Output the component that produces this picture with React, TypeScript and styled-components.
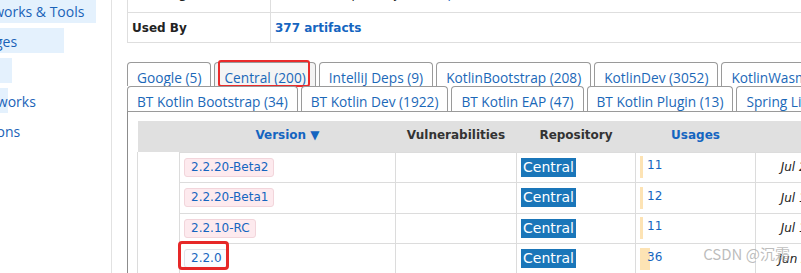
import React from 'react';
import styled, { createGlobalStyle } from 'styled-components';

const GlobalStyle = createGlobalStyle`
  html, body {
    margin: 0;
    padding: 0;
    background: #fff;
    overflow: hidden;
  }
  body {
    font-family: 'DejaVu Sans', Verdana, sans-serif;
    font-size: 12px;
    color: #222;
  }
`;

const categories = [
  { name: 'Testing Frameworks & Tools', bar: 198 },
  { name: 'Android Packages', bar: 166 },
  { name: 'JVM Languages', bar: 114 },
  { name: 'Logging Frameworks', bar: 110 },
  { name: 'Java Specifications', bar: 90 },
];

const tabsTop = [
  { label: 'Google (5)' },
  { label: 'Central (200)', marked: true, shaded: true },
  { label: 'IntelliJ Deps (9)' },
  { label: 'KotlinBootstrap (208)' },
  { label: 'KotlinDev (3052)' },
  { label: 'KotlinWasm (21)' },
];

const tabsBottom = [
  { label: 'BT Kotlin Bootstrap (34)' },
  { label: 'BT Kotlin Dev (1922)' },
  { label: 'BT Kotlin EAP (47)' },
  { label: 'BT Kotlin Plugin (13)' },
  { label: 'Spring Lib M (3)' },
];

const versions = [
  { v: '2.2.20-Beta2', pre: true, usages: 11, date: 'Jul 29, 2025' },
  { v: '2.2.20-Beta1', pre: true, usages: 12, date: 'Jul 15, 2025' },
  { v: '2.2.10-RC', pre: true, usages: 11, date: 'Jul 15, 2025' },
  { v: '2.2.0', pre: false, usages: 36, date: 'Jun 23, 2025', marked: true },
];

const Page = styled.div`
  position: relative;
  display: flex;
  margin-top: -18px;
  min-height: calc(100vh + 18px);
`;

const Sidebar = styled.aside`
  width: 111px;
  flex: none;
  overflow: hidden;
  border-right: 1px solid #e2e2e2;
  padding-top: 16px;
`;

const CategoryList = styled.ul`
  list-style: none;
  margin: 0 0 0 -102px;
  padding: 0;
  display: flex;
  flex-direction: column;
  gap: 5px;
  width: 240px;
`;

const Category = styled.li<{ $bar: number }>`
  height: 25px;
  line-height: 28px;
  padding-left: 3px;
  white-space: nowrap;
  font-family: 'Open Sans', sans-serif;
  font-size: 14px;
  color: #1a63b8;
  background: linear-gradient(#e4f1fd, #e4f1fd) no-repeat;
  background-size: ${(p) => p.$bar}px 100%;
`;

const Main = styled.main`
  flex: 1;
  min-width: 0;
  overflow: hidden;
  padding-left: 15px;
`;

const InfoTable = styled.table`
  border-collapse: collapse;
  width: 760px;

  td {
    border: 1px solid #dedede;
    height: 29px;
    padding: 0 4px;
    white-space: nowrap;
  }
  td:first-child {
    width: 134px;
    font-weight: bold;
  }
`;

const CutRow = styled.tr`
  td {
    height: 18px;
    vertical-align: bottom;
    padding-bottom: 11px;
    line-height: 14px;
  }
`;

const LinkText = styled.a<{ $bold?: boolean }>`
  color: #1565c0;
  text-decoration: none;
  font-weight: ${(p) => (p.$bold ? 'bold' : 'normal')};
`;

const Tabs = styled.div`
  margin-top: 19px;
  width: 760px;
`;

const TabRow = styled.ul<{ $h: number }>`
  list-style: none;
  margin: 0;
  padding: 0;
  display: flex;
  gap: 3px;
  height: ${(p) => p.$h}px;
`;

const Tab = styled.li<{ $shaded?: boolean }>`
  position: relative;
  flex: none;
  box-sizing: border-box;
  height: 100%;
  padding: 4px 9px 0;
  border: 1px solid #9a9a9a;
  border-bottom: none;
  border-radius: 4px 4px 0 0;
  background: ${(p) => (p.$shaded ? '#f4f4f4' : '#fff')};
  font-family: 'Open Sans', sans-serif;
  font-size: 13.7px;
  line-height: 21px;
  color: #1b68b8;
  white-space: nowrap;
`;

const TabMark = styled.span`
  position: absolute;
  left: 3px;
  right: 5px;
  top: -3px;
  bottom: -1px;
  border: 2px solid #ea2a2a;
  border-radius: 3px;
`;

const Panel = styled.div`
  border-top: 1px solid #9a9a9a;
  border-left: 1px solid #8c8c8c;
  padding: 9px 0 0 9px;
`;

const VersionTable = styled.table`
  border-collapse: collapse;
  table-layout: fixed;
  width: 740px;

  th {
    background: #e0e0e0;
    height: 31px;
    padding: 0 0 2px;
    box-sizing: border-box;
    font-weight: bold;
    text-align: center;
    color: #333;
  }
  td {
    border: 1px solid #dcdcdc;
    height: 29.5px;
    padding: 0 4px;
    vertical-align: middle;
    white-space: nowrap;
  }
`;

const HeadLink = styled.span`
  color: #1565c0;
`;

const GroupCell = styled.td`
  border-top: none !important;
  border-bottom: none !important;
`;

const VersionBadge = styled.a<{ $pre: boolean }>`
  position: relative;
  display: inline-block;
  padding: 1px 5px 1px 6px;
  line-height: 15px;
  border-radius: 3px;
  border: 1px solid ${(p) => (p.$pre ? '#f2d5db' : '#dfe3ea')};
  background: ${(p) => (p.$pre ? '#fdeaee' : '#fafcff')};
  color: #1565c0;
  text-decoration: none;
`;

const BadgeMark = styled.span`
  position: absolute;
  left: -7px;
  right: -2px;
  top: -9px;
  bottom: -3px;
  border: 3px solid #e62828;
  border-radius: 4px;
`;

const RepoBadge = styled.span`
  display: inline-block;
  padding: 0 2px;
  line-height: 19px;
  font-size: 14px;
  color: #fff;
  background: #1a76b9;
`;

const Usage = styled.a<{ $bar: number }>`
  display: block;
  height: 22px;
  line-height: 18px;
  padding-left: 7px;
  color: #1565c0;
  text-decoration: none;
  background: linear-gradient(#fde3b4, #fde3b4) no-repeat;
  background-size: ${(p) => p.$bar}px 100%;
`;

const DateCell = styled.td`
  text-align: center;
  font-style: italic;
`;

const Watermark = styled.div`
  position: absolute;
  right: 11px;
  bottom: 11px;
  font-family: 'Noto Sans CJK SC', sans-serif;
  font-size: 15px;
  color: rgba(160, 160, 160, 0.7);
  pointer-events: none;
`;

export default function App() {
  return (
    <>
      <GlobalStyle />
      <Page>
        <Sidebar>
          <CategoryList>
            {categories.map((c) => (
              <Category key={c.name} $bar={c.bar}>
                {c.name}
              </Category>
            ))}
          </CategoryList>
        </Sidebar>

        <Main>
          <InfoTable>
            <tbody>
              <CutRow>
                <td>Ranking</td>
                <td>
                  #1 in MvnRepository (<LinkText>See Top Artifacts</LinkText>)
                </td>
              </CutRow>
              <tr>
                <td>Used By</td>
                <td>
                  <LinkText $bold>377 artifacts</LinkText>
                </td>
              </tr>
            </tbody>
          </InfoTable>

          <Tabs>
            <TabRow $h={24}>
              {tabsTop.map((t) => (
                <Tab key={t.label} $shaded={t.shaded}>
                  {t.label}
                  {t.marked && <TabMark />}
                </Tab>
              ))}
            </TabRow>
            <TabRow $h={25}>
              {tabsBottom.map((t) => (
                <Tab key={t.label}>{t.label}</Tab>
              ))}
            </TabRow>

            <Panel>
              <VersionTable>
                <colgroup>
                  <col style={{ width: 42 }} />
                  <col style={{ width: 216 }} />
                  <col style={{ width: 121 }} />
                  <col style={{ width: 119 }} />
                  <col style={{ width: 120 }} />
                  <col style={{ width: 122 }} />
                </colgroup>
                <thead>
                  <tr>
                    <th />
                    <th>
                      <HeadLink>Version ▼</HeadLink>
                    </th>
                    <th>Vulnerabilities</th>
                    <th>Repository</th>
                    <th>
                      <HeadLink>Usages</HeadLink>
                    </th>
                    <th>
                      <HeadLink>Date</HeadLink>
                    </th>
                  </tr>
                </thead>
                <tbody>
                  {versions.map((r, i) => (
                    <tr key={r.v}>
                      {i === 0 && <GroupCell rowSpan={versions.length} />}
                      <td>
                        <VersionBadge $pre={r.pre}>
                          {r.v}
                          {r.marked && <BadgeMark />}
                        </VersionBadge>
                      </td>
                      <td />
                      <td>
                        <RepoBadge>Central</RepoBadge>
                      </td>
                      <td>
                        <Usage $bar={Math.round(r.usages * 0.28)}>{r.usages}</Usage>
                      </td>
                      <DateCell>{r.date}</DateCell>
                    </tr>
                  ))}
                </tbody>
              </VersionTable>
            </Panel>
          </Tabs>
        </Main>

        <Watermark>CSDN @沉霜</Watermark>
      </Page>
    </>
  );
}
